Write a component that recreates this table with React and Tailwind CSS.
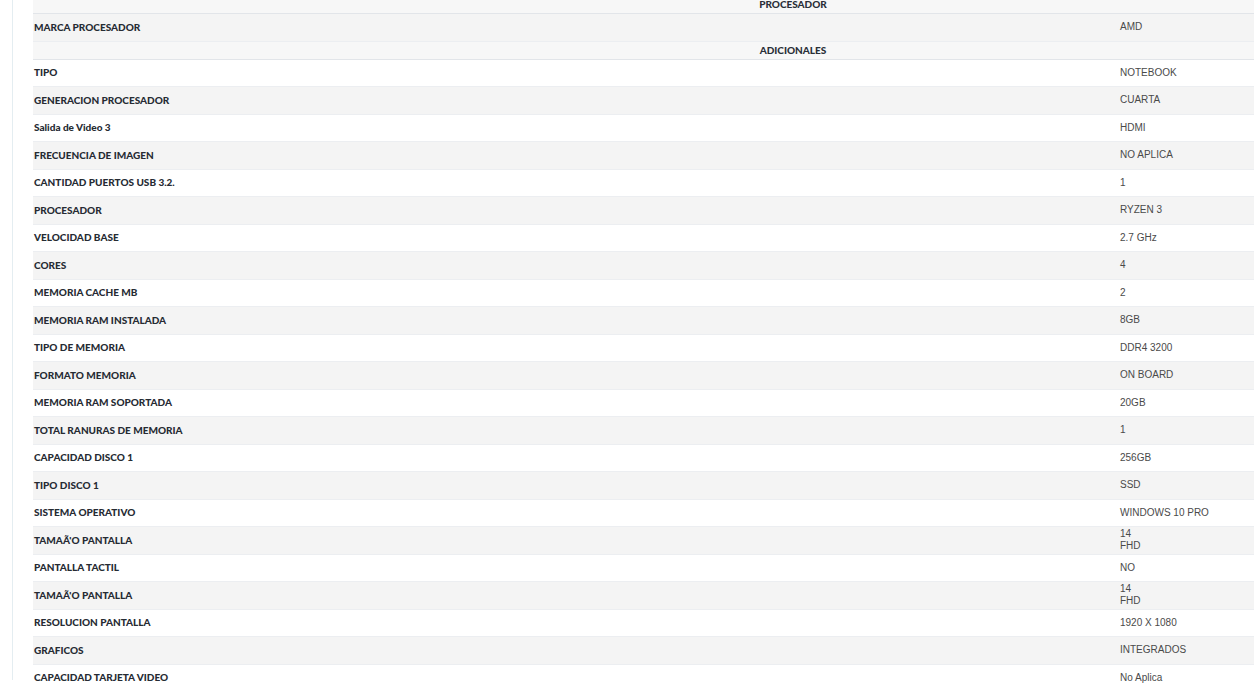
const rows = [
  ["TIPO", "NOTEBOOK"],
  ["GENERACION PROCESADOR", "CUARTA"],
  ["Salida de Video 3", "HDMI"],
  ["FRECUENCIA DE IMAGEN", "NO APLICA"],
  ["CANTIDAD PUERTOS USB 3.2.", "1"],
  ["PROCESADOR", "RYZEN 3"],
  ["VELOCIDAD BASE", "2.7 GHz"],
  ["CORES", "4"],
  ["MEMORIA CACHE MB", "2"],
  ["MEMORIA RAM INSTALADA", "8GB"],
  ["TIPO DE MEMORIA", "DDR4 3200"],
  ["FORMATO MEMORIA", "ON BOARD"],
  ["MEMORIA RAM SOPORTADA", "20GB"],
  ["TOTAL RANURAS DE MEMORIA", "1"],
  ["CAPACIDAD DISCO 1", "256GB"],
  ["TIPO DISCO 1", "SSD"],
  ["SISTEMA OPERATIVO", "WINDOWS 10 PRO"],
  ["TAMAÃ'O PANTALLA", ["14", "FHD"]],
  ["PANTALLA TACTIL", "NO"],
  ["TAMAÃ'O PANTALLA", ["14", "FHD"]],
  ["RESOLUCION PANTALLA", "1920 X 1080"],
  ["GRAFICOS", "INTEGRADOS"],
  ["CAPACIDAD TARJETA VIDEO", "No Aplica"],
];

function SectionHeader({ title }) {
  return (
    <div className="h-[18px] flex items-center justify-center bg-[#f7f7f7] border-b border-[#e2e5e9] font-['Lato',sans-serif] font-black text-[10px] text-[#2a2f38]">
      {title}
    </div>
  );
}

function SpecRow({ label, value, striped }) {
  return (
    <div
      className={`grid grid-cols-[1087px_1fr] h-[27.5px] items-center border-b border-[#eceef1] ${
        striped ? "bg-[#f4f4f4]" : "bg-white"
      }`}
    >
      <div className="pl-[1px] font-['Lato',sans-serif] font-black text-[10px] text-[#262b33]">
        {label}
      </div>
      <div className="font-['Liberation_Sans',Arial,sans-serif] text-[10px] leading-[12.5px] text-[#4a4a4a]">
        {Array.isArray(value) ? value.map((v, i) => <div key={i}>{v}</div>) : value}
      </div>
    </div>
  );
}

export default function App() {
  return (
    <div className="w-[1254px] h-[684px] overflow-hidden bg-white">
      <div className="ml-[12px] h-full border-l border-[#e4edf1] pl-[20px]">
        <div className="w-[1520px] -mt-[4px]">
          <SectionHeader title="PROCESADOR" />
          <SpecRow label="MARCA PROCESADOR" value="AMD" striped />
          <SectionHeader title="ADICIONALES" />
          {rows.map(([label, value], i) => (
            <SpecRow key={i} label={label} value={value} striped={i % 2 === 1} />
          ))}
        </div>
      </div>
    </div>
  );
}
